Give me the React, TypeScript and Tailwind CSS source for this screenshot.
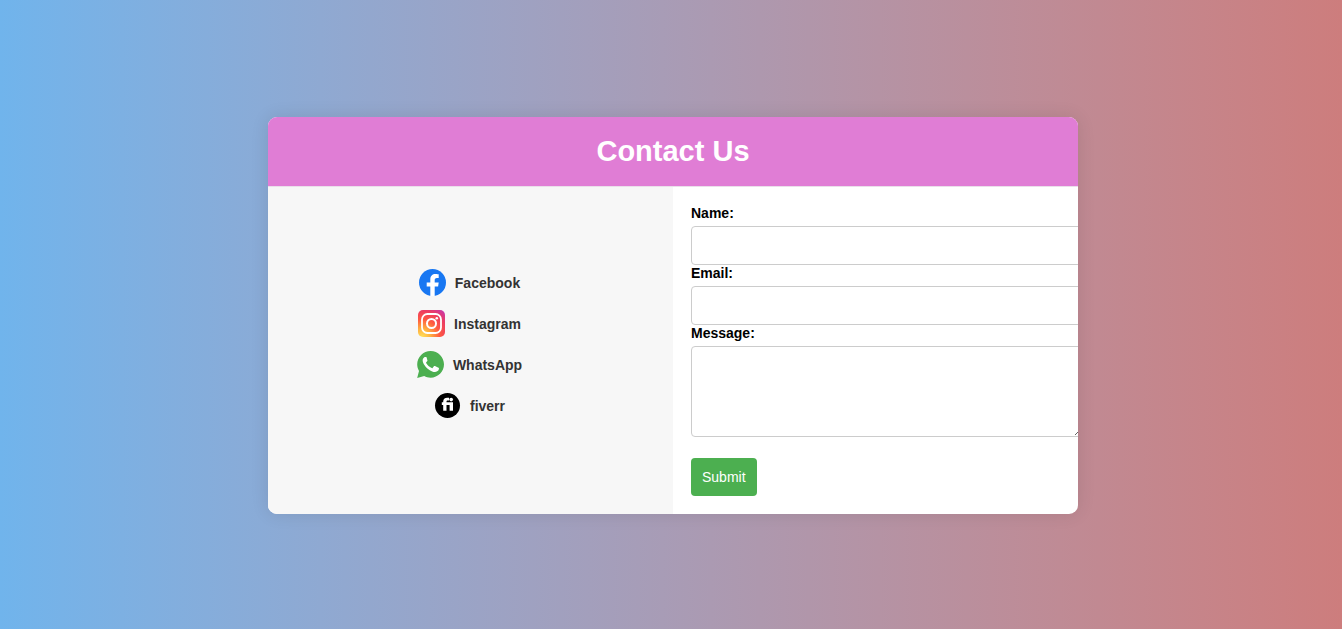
import type { ReactNode } from "react";

function FacebookIcon() {
  return (
    <svg viewBox="0 0 27 27" className="size-[27px]" aria-hidden="true">
      <circle cx="13.5" cy="13.5" r="13.5" fill="#1877f2" />
      <path
        fill="#fff"
        d="M11.3 27V17.5H7.7v-4h3.6v-3.1c0-3.5 2.1-5.4 5.2-5.4 1.5 0 3.2.3 3.200.3v3.600h-1.800c-1.700 0-2.200 1-2.200 2.100v2.500h4l-.6 4h-3.400V27z"
      />
    </svg>
  );
}

function InstagramIcon() {
  return (
    <svg viewBox="0 0 27 27" className="size-[27px]" aria-hidden="true">
      <defs>
        <radialGradient id="ig" cx="0.15" cy="1" r="1.25">
          <stop offset="0" stopColor="#ffe05a" />
          <stop offset="0.25" stopColor="#ffb040" />
          <stop offset="0.52" stopColor="#ff5a40" />
          <stop offset="0.78" stopColor="#ec3c62" />
          <stop offset="1" stopColor="#c837ab" />
        </radialGradient>
      </defs>
      <rect width="27" height="27" rx="5" fill="url(#ig)" />
      <rect x="4" y="4" width="19" height="19" rx="5.5" fill="none" stroke="#fff" strokeWidth="1.8" />
      <circle cx="13.5" cy="13.5" r="4.5" fill="none" stroke="#fff" strokeWidth="2" />
      <circle cx="18.8" cy="8.2" r="1.3" fill="#fff" />
    </svg>
  );
}

function WhatsAppIcon() {
  return (
    <svg viewBox="0 0 27 27" className="size-[27px]" aria-hidden="true">
      <path
        fill="#4caf50"
        d="M13.6 0C6.2 0 .2 6 .2 13.3c0 2.4.6 4.6 1.8 6.6L.2 27l7-1.9c1.9 1 4.1 1.6 6.4 1.6C21 26.7 27 20.7 27 13.3 27 6 21 0 13.6 0z"
      />
      <path
        fill="#fff"
        d="M9.7 6.8c-.3-.7-.6-.7-1-.7h-.8c-.4 0-.8.2-1.1.6C6.2 7.3 5.5 8.2 5.7 10c.2 1.7 1.2 3.3 1.5 3.7 2 3 4.6 5.4 8 6.7 3.2 1.2 5.5.1 6.3-1.1.4-.8.5-1.8.4-2.2-.2-.3-.5-.4-.9-.6l-3-1.4c-.4-.2-.8-.2-1.1.2l-1.3 1.6c-.3.3-.5.4-.9.2-2.4-1-4.3-2.7-5.6-5-.2-.4 0-.7.2-.9l1-1.3c.3-.4.2-.6 0-1z"
      />
    </svg>
  );
}

function FiverrIcon() {
  return (
    <svg viewBox="0 0 27 27" className="size-[27px]" aria-hidden="true">
      <circle cx="13.5" cy="13.5" r="12.5" fill="#000" />
      <path
        fill="#fff"
        d="M9.2 18.8v-5.700H7.800v-2.800h1.400V9.800c0-2.600 1.400-4 4-4h1.900v2.700h-1.300c-.9 0-1.300.4-1.300 1.200v.6H19v8.500h-3.400v-5.700h-3.100v5.700z"
      />
      <circle cx="17.2" cy="7.600" r="1.800" fill="#fff" />
    </svg>
  );
}

function SocialLink({ label, children }: { label: string; children: ReactNode }) {
  return (
    <li>
      <a href="#" className="flex items-center gap-[9px] text-[#333]">
        {children}
        <span>{label}</span>
      </a>
    </li>
  );
}

const field =
  "mt-[5px] block box-content w-full rounded border border-[#ccc] bg-white px-[11px] outline-none";

export default function App() {
  return (
    <main className="flex min-h-screen items-center justify-center bg-linear-to-r from-[#70b4ec] to-[#cd7d7d] pt-0.5 pl-1 font-['Liberation_Sans',Arial,sans-serif] text-sm leading-4">
      <section className="w-full max-w-[810px] overflow-hidden rounded-[9px] bg-white shadow-[0_0_18px_rgba(0,0,0,0.1)]">
        <header className="border-b border-[#eadfea] bg-[#e07dd5] py-[18px] text-center">
          <h1 className="text-[29px] leading-[33px] font-bold text-white">Contact Us</h1>
        </header>
        <div className="grid grid-cols-2">
          <div className="flex items-center justify-center bg-[#f7f7f7] pr-0.5 pb-[13px] font-bold">
            <ul className="flex flex-col items-center gap-3.5">
              <SocialLink label="Facebook">
                <FacebookIcon />
              </SocialLink>
              <SocialLink label="Instagram">
                <InstagramIcon />
              </SocialLink>
              <SocialLink label="WhatsApp">
                <WhatsAppIcon />
              </SocialLink>
              <SocialLink label="fiverr">
                <FiverrIcon />
              </SocialLink>
            </ul>
          </div>
          <form className="min-w-0 p-[18px]" onSubmit={(e) => e.preventDefault()}>
            <label htmlFor="name" className="block font-bold text-black">
              Name:
            </label>
            <input id="name" type="text" className={`${field} h-[37px]`} />
            <label htmlFor="email" className="block font-bold text-black">
              Email:
            </label>
            <input id="email" type="email" className={`${field} h-[37px]`} />
            <label htmlFor="message" className="block font-bold text-black">
              Message:
            </label>
            <textarea id="message" className={`${field} h-[71px] resize py-[9px]`} />
            <button
              type="submit"
              className="mt-[21px] block h-[38px] rounded bg-[#4caf50] px-[11px] text-white"
            >
              Submit
            </button>
          </form>
        </div>
      </section>
    </main>
  );
}
